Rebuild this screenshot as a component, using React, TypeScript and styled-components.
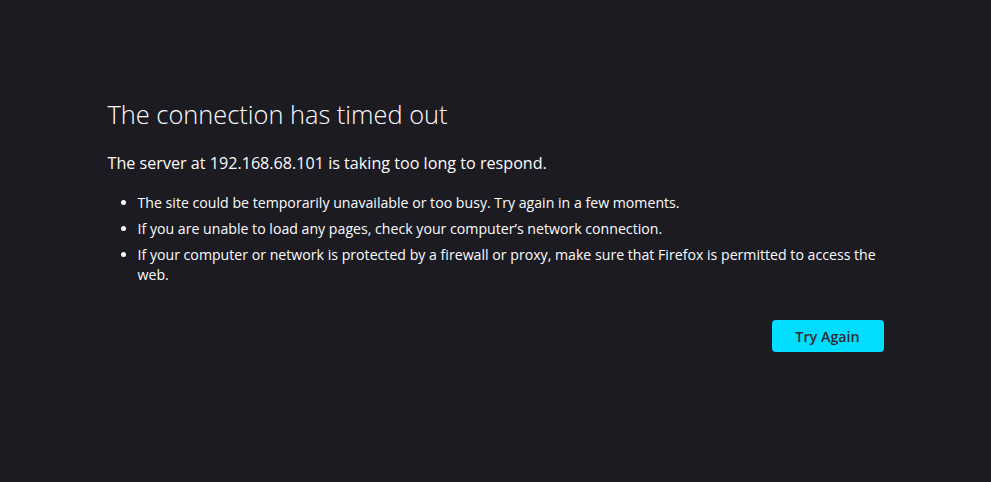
import styled, { createGlobalStyle } from "styled-components";

const GlobalStyle = createGlobalStyle`
	html, body {
		margin: 0;
		padding: 0;
		background: #1c1b22;
	}

	body {
		font-family: "Open Sans", "Noto Sans", sans-serif;
		color: #fbfbfe;
	}
`;

const Page = styled.main`
	min-height: 100vh;
	box-sizing: border-box;
	padding-top: 96px;
`;

const Container = styled.div`
	width: 776px;
	margin: 0 auto;
`;

const Title = styled.h1`
	margin: 0;
	font-size: 25.4px;
	font-weight: 300;
	line-height: 36px;
`;

const Lead = styled.p`
	margin: 19px 0 0;
	font-size: 16.15px;
	line-height: 24px;
`;

const List = styled.ul`
	margin: 18px 0 0;
	padding-left: 30px;
`;

const Item = styled.li`
	font-size: 14.15px;
	line-height: 20px;

	& + & {
		margin-top: 6px;
	}
`;

const Actions = styled.div`
	display: flex;
	justify-content: flex-end;
	margin-top: 35px;
`;

const Button = styled.button`
	width: 112px;
	height: 32px;
	border: none;
	border-radius: 4px;
	background: #00ddff;
	color: #2b2a33;
	font-family: inherit;
	font-size: 14.3px;
	font-weight: 600;
	cursor: pointer;
`;

const reasons = [
	"The site could be temporarily unavailable or too busy. Try again in a few moments.",
	"If you are unable to load any pages, check your computer\u2019s network connection.",
	"If your computer or network is protected by a firewall or proxy, make sure that Firefox is permitted to access the web.",
];

const App = () => {
	return (
		<>
			<GlobalStyle />
			<Page>
				<Container>
					<Title>The connection has timed out</Title>
					<Lead>The server at 192.168.68.101 is taking too long to respond.</Lead>
					<List>
						{reasons.map((reason, index) => (
							<Item key={index + "reason"}>{reason}</Item>
						))}
					</List>
					<Actions>
						<Button>Try Again</Button>
					</Actions>
				</Container>
			</Page>
		</>
	);
};

export default App;
